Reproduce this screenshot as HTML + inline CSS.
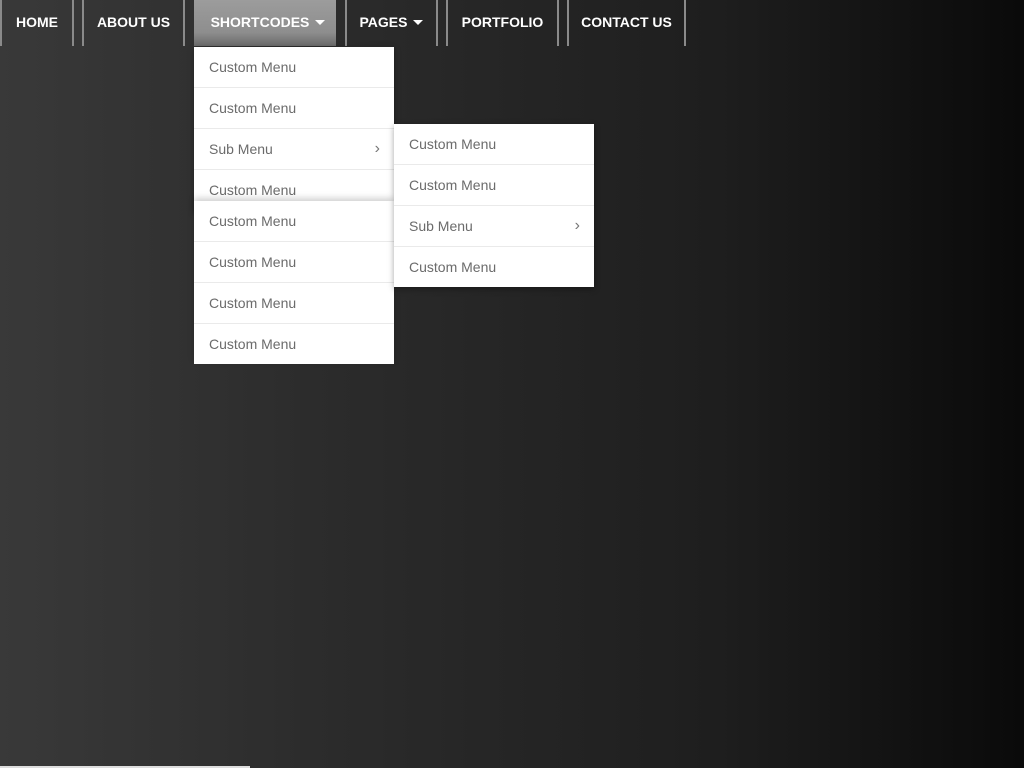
<!DOCTYPE html>
<html><head><meta charset="utf-8"><style>
*{margin:0;padding:0;box-sizing:border-box}
body{width:1024px;height:768px;overflow:hidden;background:linear-gradient(90deg,#393939 0%,#2c2c2c 30%,#1e1e1e 70%,#0a0a0a 100%);font-family:"Liberation Sans",sans-serif;position:relative}
.nav{position:absolute;top:0;left:0;height:46px}
.it{position:absolute;top:0;height:46px;border-left:2px solid #8a8a8a;border-right:2px solid #8a8a8a;color:#fff;font-weight:bold;font-size:14px;line-height:44px;text-align:center}
.it.act{border:none;background:linear-gradient(#9c9c9c,#8e8e8e 70%,#6a6a6a)}
.car{display:inline-block;width:0;height:0;border-left:5px solid transparent;border-right:5px solid transparent;border-top:5px solid #fff;vertical-align:middle;margin-left:6px;margin-top:-2px}
.menu{position:absolute;width:200px;background:#fff;box-shadow:0 2px 6px rgba(0,0,0,.35)}
.menu div{height:41px;line-height:40px;padding-left:15px;color:#6b6b6b;font-size:14px;border-bottom:1px solid #eaeaea;position:relative}
.menu div:last-child{border-bottom:none}
.ar{position:absolute;right:14px;top:0;font-size:16px;color:#777}
</style></head><body>
<div class="nav">
<div class="it" style="left:0;width:74px">HOME</div>
<div class="it" style="left:82px;width:103px">ABOUT US</div>
<div class="it act" style="left:194px;width:142px;text-indent:6px">SHORTCODES<span class="car"></span></div>
<div class="it" style="left:345px;width:93px">PAGES<span class="car"></span></div>
<div class="it" style="left:446px;width:113px">PORTFOLIO</div>
<div class="it" style="left:567px;width:119px">CONTACT US</div>
</div>
<div class="menu" style="left:194px;top:47px">
<div>Custom Menu</div><div>Custom Menu</div><div>Sub Menu<span class="ar">›</span></div><div>Custom Menu</div>
</div>
<div class="menu" style="left:194px;top:201px;box-shadow:0 -3px 6px rgba(0,0,0,.18)">
<div>Custom Menu</div><div>Custom Menu</div><div>Custom Menu</div><div style="height:40px">Custom Menu</div>
</div>
<div class="menu" style="left:394px;top:124px">
<div>Custom Menu</div><div>Custom Menu</div><div>Sub Menu<span class="ar">›</span></div><div style="height:40px">Custom Menu</div>
</div>
<div style="position:absolute;left:0;top:766px;width:250px;height:2px;background:#ddd"></div>
</body></html>
